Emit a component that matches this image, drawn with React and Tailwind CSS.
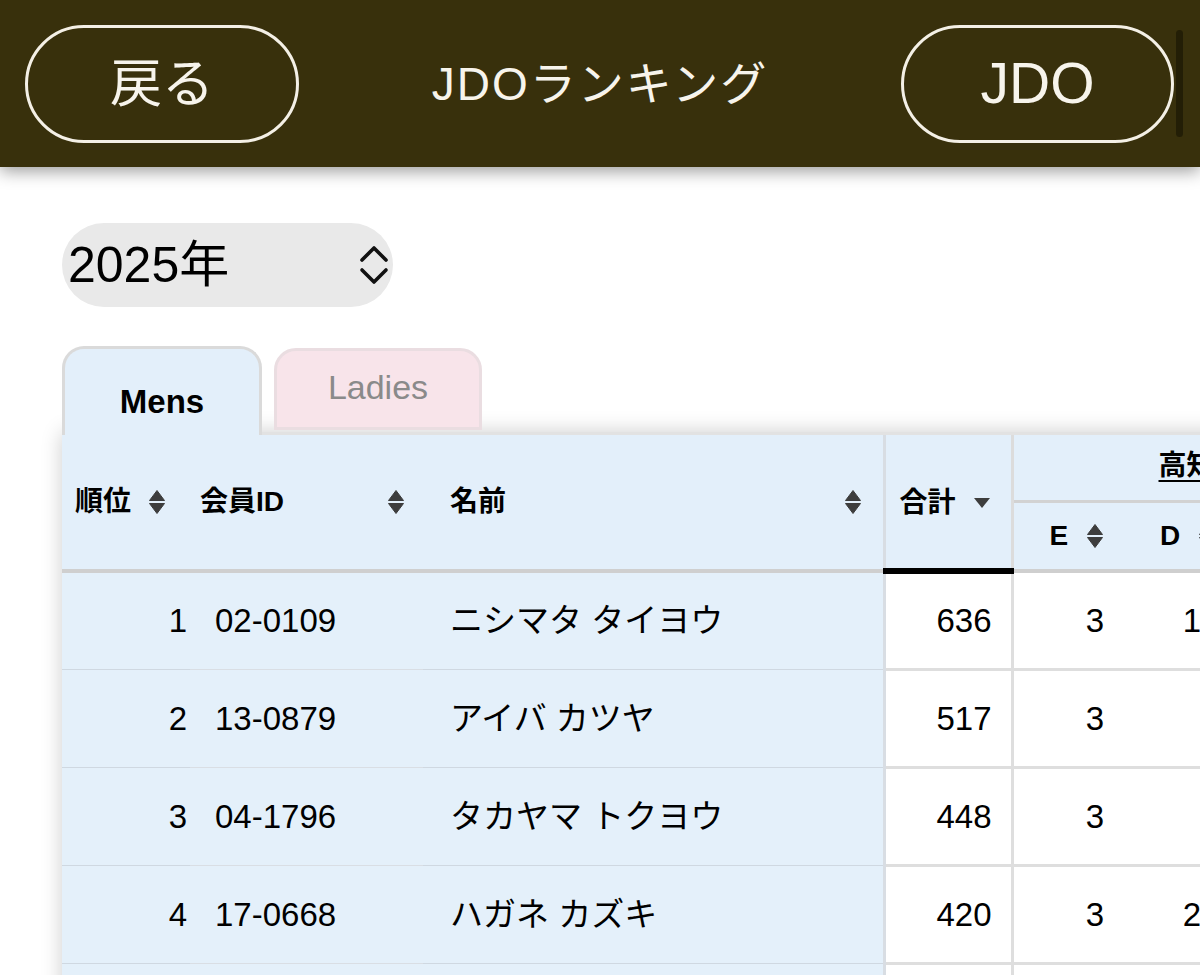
import React from 'react'

const FONT = "font-['Liberation_Sans','Noto_Sans_CJK_JP',sans-serif]"

const ROWS = [
  { rank: 1, id: '02-0109', name: 'ニシマタ タイヨウ', total: 636, e: 3, d: 1 },
  { rank: 2, id: '13-0879', name: 'アイバ カツヤ', total: 517, e: 3, d: '' },
  { rank: 3, id: '04-1796', name: 'タカヤマ トクヨウ', total: 448, e: 3, d: '' },
  { rank: 4, id: '17-0668', name: 'ハガネ カズキ', total: 420, e: 3, d: 2 },
  // fifth row only peeks in at the bottom edge
  { rank: '', id: '', name: '', total: '', e: '', d: '' },
]

function SortIcon() {
  return (
    <svg width="18" height="26" viewBox="0 0 18 26" className="inline-block shrink-0">
      <path d="M9 1.5 L16.5 11.5 L1.5 11.5 Z" fill="#3d3d3d" strokeLinejoin="round" stroke="#3d3d3d" strokeWidth="1" />
      <path d="M1.5 14.5 L16.5 14.5 L9 24.5 Z" fill="#3d3d3d" strokeLinejoin="round" stroke="#3d3d3d" strokeWidth="1" />
    </svg>
  )
}

function DownIcon() {
  return (
    <svg width="18" height="12" viewBox="0 0 18 12" className="inline-block shrink-0">
      <path d="M1 1 L17 1 L9 11 Z" fill="#3d3d3d" />
    </svg>
  )
}

export default function App() {
  return (
    <div className={`w-[1200px] h-[975px] overflow-hidden bg-white text-black ${FONT}`}>
      {/* Top bar */}
      <header className="relative z-20 h-[167px] bg-[#38300c] flex items-center pl-[25px] pr-[17px] shadow-[0_4px_16px_rgba(0,0,0,0.4)]">
        <button className="w-[274px] h-[118px] rounded-full border-[3px] border-[#f4f0e6] text-[#f7f4ec] text-[52px] leading-none flex items-center justify-center">
          戻る
        </button>
        <div className="flex-1 text-center text-[#f7f4ec] text-[46px] tracking-[2px] leading-none">JDOランキング</div>
        <button className="w-[273px] h-[118px] rounded-full border-[3px] border-[#f4f0e6] text-[#f7f4ec] text-[57px] leading-none flex items-center justify-center">
          JDO
        </button>
        <div className="ml-[2px] w-[7px] h-[107px] rounded-full bg-[#231e06]" />
      </header>

      <main className="pl-[62px] pt-[56px]">
        {/* Year select */}
        <div className="w-[331px] h-[84px] rounded-full bg-[#e9e9e9] flex items-center justify-between pl-[6px] pr-[4px]">
          <span className="text-[50px] leading-none">2025年</span>
          <svg width="30" height="42" viewBox="0 0 30 42" fill="none" stroke="#111" strokeWidth="3.6" strokeLinecap="round" strokeLinejoin="round">
            <path d="M3 16 L15 4 L27 16" />
            <path d="M3 26 L15 38 L27 26" />
          </svg>
        </div>

        {/* Tabs */}
        <div className="mt-[39px] flex items-end gap-[12px]">
          <div className="relative z-10 -mb-[3px] w-[200px] h-[89px] rounded-t-[22px] border-[3px] border-b-0 border-[#dadada] bg-[#e3effa] flex items-center justify-center pt-[18px]">
            <span className="text-[33px] font-bold leading-none">Mens</span>
          </div>
          <div className="w-[208px] h-[82px] mb-[2px] rounded-t-[22px] border-[3px] border-[#eadde1] bg-[#f8e4ea] flex items-center justify-center pb-[4px]">
            <span className="text-[34px] leading-none text-[#8a8a8a]">Ladies</span>
          </div>
        </div>

        {/* Ranking table */}
        <div className="w-[1400px] border-t-[3px] border-[#e2e2e2] shadow-[0_0_20px_rgba(0,0,0,0.2)]">
          <table className="table-fixed border-collapse w-[1400px]">
            <colgroup>
              <col className="w-[128px]" />
              <col className="w-[235px]" />
              <col className="w-[459px]" />
              <col className="w-[128px]" />
              <col className="w-[121px]" />
              <col className="w-[121px]" />
              <col className="w-[208px]" />
            </colgroup>
            <thead>
              <tr className="h-[66px]">
                <th rowSpan={2} className="bg-[#e3effa] border-b-[4px] border-[#cfcfcf] pl-[13px] text-left align-middle">
                  <div className="flex items-center gap-[17px] text-[28px] font-bold leading-none">順位<SortIcon /></div>
                </th>
                <th rowSpan={2} className="bg-[#e3effa] border-b-[4px] border-[#cfcfcf] pl-[10px] pr-[20px] align-middle">
                  <div className="flex items-center justify-between text-[28px] font-bold leading-none">会員ID<SortIcon /></div>
                </th>
                <th rowSpan={2} className="bg-[#e3effa] border-b-[4px] border-r-[3px] border-[#cfcfcf] border-r-[#d8dde3] pl-[25px] pr-[21px] align-middle">
                  <div className="flex items-center justify-between text-[28px] font-bold leading-none">名前<SortIcon /></div>
                </th>
                <th rowSpan={2} className="bg-[#e3effa] border-b-[6px] border-r-[3px] border-b-black border-r-[#dcdcdc] pl-[14px] align-middle">
                  <div className="flex items-center gap-[17px] text-[28px] font-bold leading-none pt-[2px]">合計<DownIcon /></div>
                </th>
                <th colSpan={3} className="bg-[#e3effa] border-b-[3px] border-[#d2d2d2] text-left pl-[145px] align-middle">
                  <span className="text-[28px] font-bold leading-none underline underline-offset-[5px] decoration-[2px]">高知県オープン</span>
                </th>
              </tr>
              <tr className="h-[70px]">
                <th className="bg-[#e3effa] border-b-[4px] border-[#cfcfcf] pl-[36px] text-left align-middle">
                  <div className="flex items-center gap-[18px] text-[28px] font-bold leading-none">E<SortIcon /></div>
                </th>
                <th className="bg-[#e3effa] border-b-[4px] border-[#cfcfcf] pl-[27px] text-left align-middle">
                  <div className="flex items-center gap-[18px] text-[28px] font-bold leading-none">D<SortIcon /></div>
                </th>
                <th className="bg-[#e3effa] border-b-[4px] border-[#cfcfcf] pl-[27px] text-left align-middle">
                  <div className="flex items-center gap-[18px] text-[28px] font-bold leading-none">C<SortIcon /></div>
                </th>
              </tr>
            </thead>
            <tbody>
              {ROWS.map((r, i) => (
                <tr key={i} className="h-[98px] text-[33px] leading-none">
                  <td className="bg-[#e4f0fa] border-b border-[#cfd8e1] text-right pr-[3px] align-middle">{r.rank}</td>
                  <td className="relative bg-[#e4f0fa] border-b border-[#cfd8e1] pl-[25px] align-middle">
                    {r.id}
                    <div className="absolute left-0 right-[2px] -bottom-[3px] h-[3px] bg-[#d9dee4]" />
                  </td>
                  <td className="bg-[#e4f0fa] border-b border-r-[3px] border-[#cfd8e1] border-r-[#d8dde3] pl-[25px] align-middle whitespace-nowrap">{r.name}</td>
                  <td className="bg-white border-b-[3px] border-r-[3px] border-[#dedede] text-right pr-[19px] align-middle">{r.total}</td>
                  <td className="bg-white border-b-[3px] border-[#dedede] text-right pr-[29px] align-middle">{r.e}</td>
                  <td className="bg-white border-b-[3px] border-[#dedede] text-right pr-[53px] align-middle">{r.d}</td>
                  <td className="bg-white border-b-[3px] border-[#dedede] align-middle" />
                </tr>
              ))}
            </tbody>
          </table>
        </div>
      </main>
    </div>
  )
}
